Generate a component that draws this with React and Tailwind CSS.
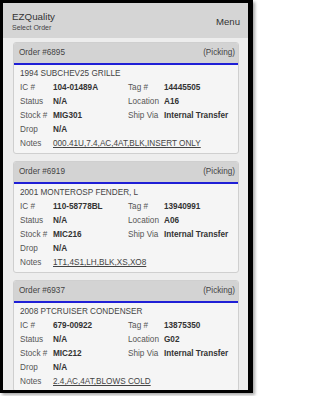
import React from "react";

const orders = [
  {
    id: "6895",
    title: "1994 SUBCHEV25 GRILLE",
    ic: "104-01489A",
    tag: "14445505",
    location: "A16",
    stock: "MIG301",
    notes: "000.41U,7.4,AC,4AT,BLK,INSERT ONLY",
  },
  {
    id: "6919",
    title: "2001 MONTEROSP FENDER, L",
    ic: "110-58778BL",
    tag: "13940991",
    location: "A06",
    stock: "MIC216",
    notes: "1T1,4S1,LH,BLK,XS,XO8",
  },
  {
    id: "6937",
    title: "2008 PTCRUISER CONDENSER",
    ic: "679-00922",
    tag: "13875350",
    location: "G02",
    stock: "MIC212",
    notes: "2.4,AC,4AT,BLOWS COLD",
  },
];

const OrderCard = ({ order }) => {
  return (
    <div className="rounded-[3px] border border-[#cfcfcf] bg-[#f5f5f5] overflow-hidden">
      <div className="h-[20px] bg-[#d3d3d3] flex items-center justify-between pl-[5px] pr-[3px] text-[8.2px] text-[#444]">
        <span>Order #{order.id}</span>
        <span>(Picking)</span>
      </div>
      <div className="h-[2px] bg-[#1f1fd6]" />
      <div className="pl-[6px] pt-[2px] pb-[2px] text-[8.2px] leading-[14px] text-[#444]">
        <div>{order.title}</div>
        <div className="grid grid-cols-[33px_75px_36px_1fr]">
          <span className="text-[#555]">IC #</span>
          <span className="font-bold text-[#333]">{order.ic}</span>
          <span className="text-[#555]">Tag #</span>
          <span className="font-bold text-[#333]">{order.tag}</span>

          <span className="text-[#555]">Status</span>
          <span className="font-bold text-[#333]">N/A</span>
          <span className="text-[#555]">Location</span>
          <span className="font-bold text-[#333]">{order.location}</span>

          <span className="text-[#555]">Stock #</span>
          <span className="font-bold text-[#333]">{order.stock}</span>
          <span className="text-[#555]">Ship Via</span>
          <span className="font-bold text-[#333] whitespace-nowrap">Internal Transfer</span>

          <span className="text-[#555]">Drop</span>
          <span className="font-bold text-[#333] col-span-3">N/A</span>

          <span className="text-[#555]">Notes</span>
          <span className="col-span-3 underline text-[#444] whitespace-nowrap">{order.notes}</span>
        </div>
      </div>
    </div>
  );
};

export default function App() {
  return (
    <div
      className="w-[256px] h-[396px] bg-white"
      style={{ fontFamily: '"Liberation Sans", Arial, sans-serif' }}
    >
      <div className="w-[253px] h-[393px] border-black border-t-[3px] border-l-[3px] border-b-[3px] border-r-[5px] overflow-hidden bg-[#ededed] shadow-[2px_2px_3px_rgba(0,0,0,0.35)]">
        <div className="h-[35px] bg-[#d5d5d5] flex items-center justify-between pl-[9px] pr-[8px]">
          <div className="flex flex-col pt-[1px]">
            <span className="text-[9.8px] leading-[12px] text-[#333]">EZQuality</span>
            <span className="text-[7px] leading-[9px] text-[#444]">Select Order</span>
          </div>
          <span className="text-[9.6px] text-[#333] pt-[4px]">Menu</span>
        </div>
        <div className="flex flex-col gap-[7px] pt-[4px] pl-[10px] pr-[9px]">
          {orders.map((o) => (
            <OrderCard key={o.id} order={o} />
          ))}
        </div>
      </div>
    </div>
  );
}
